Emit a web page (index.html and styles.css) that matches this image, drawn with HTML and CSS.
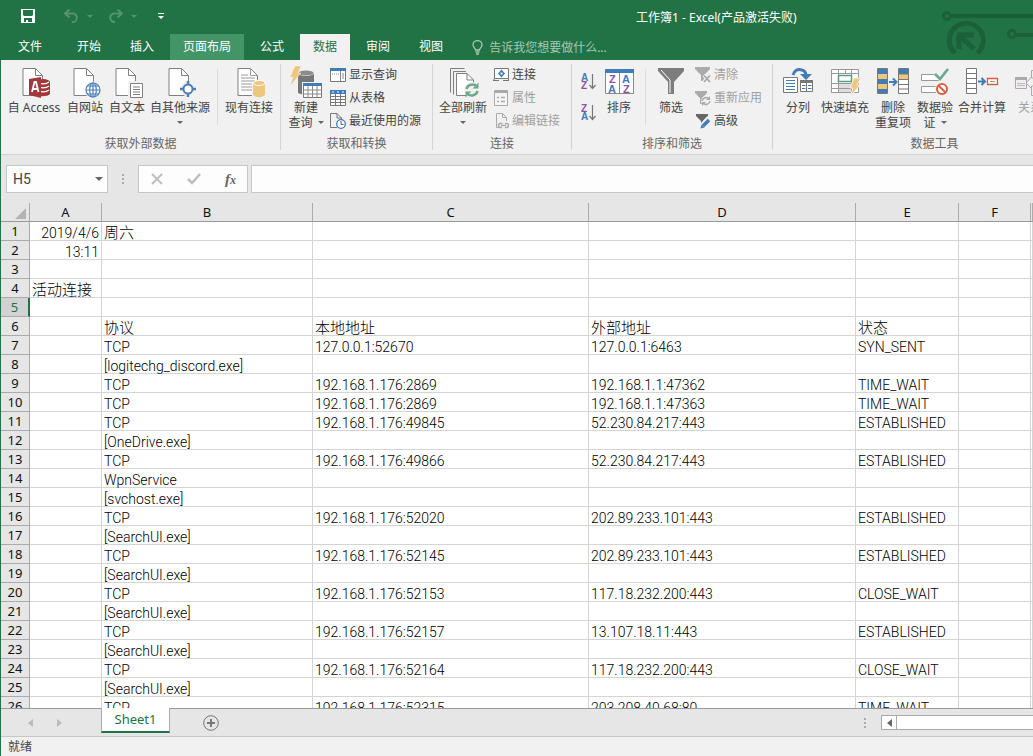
FILE: index.html
```html
<!DOCTYPE html>
<html lang="zh-CN">
<head>
<meta charset="utf-8">
<title>工作簿1 - Excel</title>
<link rel="stylesheet" href="styles.css">
</head>
<body>
<div class="window">
  <header class="top">
    <svg class="circuit" width="96" height="60" viewBox="0 0 96 60" fill="none" stroke="#1b6038">
      <circle cx="10" cy="16" r="3.500" stroke-width="3"/><path d="M14 16H96" stroke-width="4"/>
      <circle cx="75" cy="34" r="3.500" stroke-width="3"/><path d="M79 35H96" stroke-width="4"/>
      <path d="M18 53A17 17 0 1 1 40.500 53" stroke-width="5"/>
      <path d="M22 49V35M20 35H37M24 37L37 49" stroke-width="5"/>
    </svg>
    <div class="titlebar">
      <button class="qat save" aria-label="保存"><svg width="14" height="14" viewBox="0 0 14 14"><path fill="#fff" fill-rule="evenodd" d="M0 0H14V14H0ZM2 1V6L3 7H11L12 6V1ZM3 9V13H5V11H7V13H11V9Z"/></svg></button>
      <button class="qat undo" aria-label="撤消"><svg width="15" height="14" viewBox="0 0 15 14" fill="none" stroke="#54936f" stroke-width="2"><path d="M5.500 0.500L1 4.500L5.500 8.500M1.500 4.500H9A4.200 4.200 0 0 1 8 13"/></svg></button>
      <i class="caret dim"></i>
      <button class="qat redo" aria-label="恢复"><svg width="15" height="14" viewBox="0 0 15 14" fill="none" stroke="#54936f" stroke-width="2"><path d="M9.500 0.500L14 4.500L9.500 8.500M13.500 4.500H6A4.200 4.200 0 0 0 7 13"/></svg></button>
      <i class="caret dim"></i>
      <button class="qat more" aria-label="自定义快速访问工具栏"><svg width="6" height="7" viewBox="0 0 6 7" fill="#fff"><path d="M0 0H6V1H0ZM0 3H6L3 6Z"/></svg></button>
      <h1>工作簿1 - Excel(产品激活失败)</h1>
    </div>
    <nav class="tabs">
      <button class="tab file">文件</button>
      <button class="tab">开始</button>
      <button class="tab">插入</button>
      <button class="tab hover">页面布局</button>
      <button class="tab">公式</button>
      <button class="tab active">数据</button>
      <button class="tab">审阅</button>
      <button class="tab">视图</button>
      <button class="tellme"><svg width="11" height="15" viewBox="0 0 11 15" fill="none" stroke="#a3c9b3" stroke-width="1.300"><path d="M3.500 10C3.500 8 1 7.500 1 4.800A4.500 4.200 0 0 1 10 4.800C10 7.500 7.500 8 7.500 10ZM3.500 12H7.500M4 14H7"/></svg>告诉我您想要做什么...</button>
    </nav>
  </header>

  <div class="ribbon">
    <section class="group external">
      <div class="tools">
        <button class="big w60"><svg class="ic" viewBox="0 0 32 32"><path d="M5 2.500H17.500L24.500 9.500V29.500H5Z" fill="#fff" stroke="#808080"/><path d="M17.500 2.500V9.500H24.500" fill="none" stroke="#808080"/><ellipse cx="25" cy="16" rx="7" ry="3" fill="#a4373a"/><path d="M18 16H32V28Q29 31 21 30Z" fill="#a4373a"/><path d="M21 17Q27 19 31 16M21 21Q27 23 31 20M21 25Q27 27 31 24" stroke="#fff" fill="none" stroke-width="1.300"/><path d="M11 13L23 11V32L11 29Z" fill="#a4373a"/><path d="M14 26L16.500 16H18L20.500 26M15 23H20" fill="none" stroke="#fff" stroke-width="1.800"/></svg><span>自 Access</span></button>
        <button class="big w42"><svg class="ic" viewBox="0 0 32 32"><path d="M5 2.500H17.500L24.500 9.500V29.500H5Z" fill="#fff" stroke="#808080"/><path d="M17.500 2.500V9.500H24.500" fill="none" stroke="#808080"/><circle cx="24" cy="24" r="8.500" fill="#f1f1f1"/><g fill="#fff" stroke="#4a7fb8" stroke-width="1.200"><circle cx="24" cy="24" r="7"/><ellipse cx="24" cy="24" rx="3.300" ry="7"/><path d="M17 24H31M18.500 20H29.500M18.500 28H29.500M24 17V31"/></g></svg><span>自网站</span></button>
        <button class="big w42"><svg class="ic" viewBox="0 0 32 32"><path d="M5 2.500H17.500L24.500 9.500V29.500H5Z" fill="#fff" stroke="#808080"/><path d="M17.500 2.500V9.500H24.500" fill="none" stroke="#808080"/><path d="M17 15H33V33H17Z" fill="#f1f1f1"/><path d="M19.500 17.500H31.500V31.500H19.500Z" fill="#fff" stroke="#808080"/><path d="M22 21H29M22 23.500H29M22 26H29M22 28.500H29" stroke="#808080"/></svg><span>自文本</span></button>
        <button class="big w64"><svg class="ic" viewBox="0 0 32 32"><path d="M5 2.500H17.500L24.500 9.500V29.500H5Z" fill="#fff" stroke="#808080"/><path d="M17.500 2.500V9.500H24.500" fill="none" stroke="#808080"/><circle cx="24" cy="23" r="7.500" fill="#f1f1f1"/><circle cx="24" cy="23" r="4.500" fill="#fff" stroke="#4a7fb8" stroke-width="2"/><path d="M24 15V19M24 27V31M16 23H20M28 23H32" stroke="#4a7fb8" stroke-width="2.500"/></svg><span>自其他来源</span><span class="second"><i class="caret"></i></span></button>
        <i class="sep"></i>
        <button class="big w54"><svg class="ic" viewBox="0 0 32 32"><path d="M5 2.500H17.500L24.500 9.500V29.500H5Z" fill="#fff" stroke="#808080"/><path d="M17.500 2.500V9.500H24.500M8 9H15M8 12H22M8 15H22M8 18H19M8 21H19M8 24H19" fill="none" stroke="#999"/><path d="M19 17Q25 12 32 16V32H19Z" fill="#f1f1f1"/><path d="M20 17V29Q26 33.500 32 29V17Z" fill="#eec67c"/><ellipse cx="26" cy="17" rx="6" ry="2.500" fill="#eec67c" stroke="#fff"/></svg><span>现有连接</span></button>
      </div>
      <h2>获取外部数据</h2>
    </section>

    <section class="group transform">
      <div class="tools">
        <button class="big w44"><svg class="ic" viewBox="0 0 32 32"><path d="M8 7V27Q16 31 24 27V7Z" fill="#777"/><ellipse cx="16" cy="7" rx="8" ry="3" fill="#f1f1f1"/><ellipse cx="16" cy="7" rx="7.500" ry="2.500" fill="#8b8b8b"/><path d="M5 0H11L8 7H11L0 20L3 11H0Z" fill="#eec67c" stroke="#f1f1f1" stroke-width=".5"/><path d="M12 16H32V32H12Z" fill="#f1f1f1"/><path d="M13.500 17.500H31.500V31.500H13.500Z" fill="#fff" stroke="#777"/><path d="M13 17H32V20H13Z" fill="#3f7cb8"/><path d="M13 24H32M13 28H32M18 20V32M22.500 20V32M27 20V32" stroke="#888"/></svg><span>新建</span><span class="second">查询<i class="caret"></i></span></button>
        <div class="stack">
          <button class="small"><svg class="si" viewBox="0 0 16 16"><path d="M.5 1.500H15.500V14.500H.5Z" fill="#fff" stroke="#777"/><path d="M0 1H16V4H0Z" fill="#3f7cb8"/><path d="M10.500 4V14M2 7H3M4 7H5M6 7H7M12 7H14M12 9H14M12 11H14M8 7H9" stroke="#888"/></svg>显示查询</button>
          <button class="small"><svg class="si" viewBox="0 0 16 16"><path d="M.5.5H15.500V15.500H.5Z" fill="#fff" stroke="#777"/><path d="M0 0H16V4H0Z" fill="#3f7cb8"/><path d="M2 2H4M7 2H9M12 2H14" stroke="#fff"/><path d="M0 6.500H16M0 9.500H16M0 12.500H16M5.500 4V16M10.500 4V16" stroke="#777"/></svg>从表格</button>
          <button class="small"><svg class="si" viewBox="0 0 16 16"><path d="M.5.5H7L11.500 5V7M7 14.500H.5V.5M7 .5V5H11.500" fill="none" stroke="#777"/><circle cx="11" cy="11" r="4.300" fill="#fff" stroke="#3f7cb8" stroke-width="1.300"/><path d="M11 8V11.500H13.500" fill="none" stroke="#666"/></svg>最近使用的源</button>
        </div>
      </div>
      <h2>获取和转换</h2>
    </section>

    <section class="group links">
      <div class="tools">
        <button class="big w54"><svg class="ic" viewBox="0 0 32 32"><g fill="#fff" stroke="#808080"><path d="M3.500 26.500V2.500H17.500M6.500 28.500V5.500H19" fill="none"/><path d="M9.500 7.500H20L26.500 14V29.500H9.500Z"/><path d="M20 7.500V14H26.500" fill="none"/></g><circle cx="25" cy="24" r="8" fill="#f1f1f1"/><path d="M19.500 23A6 5.500 0 0 1 30 20.500M30.500 25A6 5.500 0 0 1 20 27.500" fill="none" stroke="#6fa98e" stroke-width="2.500"/><path d="M31.500 16.500V22.500H25.500ZM18.500 31.500V25.500H24.500Z" fill="#6fa98e"/></svg><span>全部刷新</span><span class="second"><i class="caret"></i></span></button>
        <div class="stack">
          <button class="small"><svg class="si" viewBox="0 0 16 16"><path d="M1.500 1.500H15.500V11.500H1.500Z" fill="#fff" stroke="#777"/><path d="M0 13.500H6M10 13.500H16M1 11.500V13.500M15.500 11.500V13.500" stroke="#777"/><path d="M8.500 2.500L12 6.500L8.500 10.500L5 6.500Z" fill="#3f7cb8"/><path d="M7.500 5.500H9.500V7.500H7.500Z" fill="#fff"/></svg>连接</button>
          <button class="small off" disabled><svg class="si" viewBox="0 0 16 16"><path d="M1.500.5H14.500V15.500H1.500Z" fill="#f6f6f6" stroke="#aaa"/><path d="M1 1H15V3H1Z" fill="#aaa"/><path d="M4 7.500H6M4 11.500H6M8 7.500H12M8 11.500H12" stroke="#aaa" stroke-width="1.500"/></svg>属性</button>
          <button class="small off" disabled><svg class="si" viewBox="0 0 16 16"><path d="M6 14.500H3.500V.5H9.500L13.500 4.500V8M9.500.5V4.500H13.500" fill="none" stroke="#aaa"/><path d="M9 14.500H7.500A2 2 0 0 1 7.500 10.500H9.500M12 14.500H13.500A2 2 0 0 0 13.500 10.500H12M8 12.500H13" fill="none" stroke="#aaa" stroke-width="1.500"/></svg>编辑链接</button>
        </div>
      </div>
      <h2>连接</h2>
    </section>

    <section class="group sorting">
      <div class="tools">
        <div class="pair">
          <button class="order" aria-label="升序"><svg width="16" height="20" viewBox="0 0 16 20"><text class="az blue" x="0" y="8">A</text><text class="az purple" x="0" y="16">Z</text><path d="M11.500 1V15M8.500 12L11.500 15.500L14.500 12" fill="none" stroke="#777" stroke-width="1.200"/></svg></button>
          <button class="order" aria-label="降序"><svg width="16" height="20" viewBox="0 0 16 20"><text class="az purple" x="0" y="8">Z</text><text class="az blue" x="0" y="16">A</text><path d="M11.500 1V15M8.500 12L11.500 15.500L14.500 12" fill="none" stroke="#777" stroke-width="1.200"/></svg></button>
        </div>
        <button class="big w42"><svg class="ic" viewBox="0 0 32 32"><path d="M2.500 3.500H30.500V27.500H2.500Z" fill="#fff" stroke="#888"/><path d="M2 3H31V7H2Z" fill="#3f7cb8"/><path d="M16.500 7V27" stroke="#888"/><text class="azl purple" x="6" y="17">Z</text><text class="azl blue" x="5" y="27">A</text><text class="azl blue" x="19" y="17">A</text><text class="azl purple" x="20" y="27">Z</text></svg><span>排序</span></button>
        <i class="sep"></i>
        <button class="big w42"><svg class="ic" viewBox="0 0 32 32"><path d="M3 2H29V5L19 16V28H13V16L3 5Z" fill="#7d7d7d"/><path d="M6 4L15 14V27" fill="none" stroke="#fff"/></svg><span>筛选</span></button>
        <div class="stack">
          <button class="small off" disabled><svg class="si" viewBox="0 0 16 16"><path d="M0 0H15V2L9 8V14H6V8L0 2Z" fill="#aaa"/><path d="M9 8L15 15M15 8L9 15" stroke="#f1f1f1" stroke-width="4"/><path d="M9 8.500L15 15M15 8.500L9 15" stroke="#aaa" stroke-width="1.800"/></svg>清除</button>
          <button class="small off" disabled><svg class="si" viewBox="0 0 16 16"><path d="M0 1H12V3L7 8V14H5V8L0 3Z" fill="#aaa"/><circle cx="11" cy="11" r="5" fill="#f1f1f1"/><path d="M7 11A4 4 0 0 1 14 9M15 11A4 4 0 0 1 8 13" fill="none" stroke="#aaa" stroke-width="1.500"/><path d="M15 6V10H11ZM7 16V12H11Z" fill="#aaa"/></svg>重新应用</button>
          <button class="small"><svg class="si" viewBox="0 0 16 16"><path d="M1 1H13V3L8 8V14H6V8L1 3Z" fill="#666"/><path d="M14 5L5 15" stroke="#f1f1f1" stroke-width="5"/><path d="M14 7L8 13" stroke="#3f7cb8" stroke-width="3.500"/><path d="M5.500 15.500L6.500 11.500L9.500 14.500Z" fill="#3f7cb8"/></svg>高级</button>
        </div>
      </div>
      <h2>排序和筛选</h2>
    </section>

    <section class="group datatools">
      <div class="tools">
        <button class="big w40"><svg class="ic" viewBox="0 0 32 32"><path d="M11 9Q13 2 20 4Q24 5 24 10" fill="none" stroke="#3f7cb8" stroke-width="3"/><path d="M18 8H30L24 14Z" fill="#3f7cb8"/><path d="M1.500 11.500H15.500V26.500H1.500Z" fill="#fff" stroke="#777"/><path d="M4 14.500H13M4 17.500H13M4 20.500H13M4 23.500H13" stroke="#3f7cb8"/><path d="M18.500 14.500H30.500V25.500H18.500Z" fill="#fff" stroke="#777"/><path d="M18 14H31V17H18Z" fill="#777"/><path d="M20 19.500H23.500M26 19.500H29.500M20 22.500H23.500M26 22.500H29.500" stroke="#3f7cb8"/><path d="M24.500 17V26" stroke="#777"/></svg><span>分列</span></button>
        <button class="big w54"><svg class="ic" viewBox="0 0 32 32"><path d="M2.500 3.500H29.500V26.500H2.500Z" fill="#fff" stroke="#999"/><path d="M9 17H22V26H9Z" fill="#ddd"/><path d="M2 7.500H30M2 17.500H30M2 22.500H22M9.500 3V27M16.500 3V8M22.500 3V27" stroke="#999"/><path d="M9.500 9.500H22.500V15.500H9.500Z" fill="#fff" stroke="#5a9e7c" stroke-width="1.500"/><path d="M25 12H32L28 19H31L21 31L24 22H21Z" fill="#eec67c" stroke="#f1f1f1"/></svg><span>快速填充</span></button>
        <button class="big w42"><svg class="ic" viewBox="0 0 32 32"><path d="M.5 2.500H10.500V27.500H.5ZM21.500 2.500H31.500V27.500H21.500Z" fill="#fff" stroke="#777"/><path d="M1 3H10V8H1ZM1 13H10V18H1ZM1 23H10V27H1ZM22 3H31V8H22Z" fill="#3f7cb8"/><path d="M1 8H10V13H1ZM1 18H10V23H1ZM22 8H31V13H22Z" fill="#eec67c"/><path d="M22 13.500H31M22 18.500H31M22 23H31M22 8H31" stroke="#777"/><path d="M12 16H19M16 12.500L19.500 16L16 19.500" fill="none" stroke="#3f7cb8" stroke-width="2"/></svg><span>删除</span><span class="second">重复项</span></button>
        <button class="big w42"><svg class="ic" viewBox="0 0 32 32"><path d="M2.500 8.500H19.500V14.500H2.500ZM2.500 20.500H19.500V26.500H2.500Z" fill="#fff" stroke="#999"/><path d="M17 7L22 13L29 4" fill="none" stroke="#f1f1f1" stroke-width="5"/><path d="M16 8L21 13L29 3" fill="none" stroke="#6fa98e" stroke-width="2.800"/><circle cx="23" cy="23" r="7" fill="#f1f1f1"/><circle cx="23" cy="23" r="5" fill="#fff" stroke="#d65f43" stroke-width="2"/><path d="M19.500 19.500L26.500 26.500" stroke="#d65f43" stroke-width="2"/></svg><span>数据验</span><span class="second">证<i class="caret"></i></span></button>
        <button class="big w52"><svg class="ic" viewBox="0 0 32 32"><path d="M.5 2.500H10.500V27.500H.5Z" fill="#fff" stroke="#777"/><path d="M0 7.500H11M0 12.500H11M0 17.500H11M0 22.500H11" stroke="#777"/><path d="M12 15.500H18M15.500 12L19 15.500L15.500 19" fill="none" stroke="#3f7cb8" stroke-width="2"/><path d="M21.500 12.500H31.500V18.500H21.500Z" fill="#fff" stroke="#d65f43" stroke-width="1.300"/><path d="M24 15.500H29" stroke="#999"/></svg><span>合并计算</span></button>
        <button class="big w44 off" disabled><svg class="ic" viewBox="0 0 32 32"><path d="M1.500 11.500H12.500V22.500H1.500Z" fill="#f1edf3" stroke="#aaa"/><path d="M1 11H13V14H1Z" fill="#aaa"/><path d="M3 17.500H11M3 19.500H11" stroke="#bbb"/><path d="M13 16L20 8M13 18L20 25" stroke="#aaa"/><path d="M17.500 4.500H28V12H17.500ZM17.500 20H28V29.500H17.500Z" fill="#f1edf3" stroke="#aaa"/></svg><span>关系</span></button>
      </div>
      <h2>数据工具</h2>
    </section>
  </div>

  <div class="formulabar">
    <div class="namebox"><input aria-label="名称框" value="H5"><i class="caret"></i></div>
    <i class="dots"></i>
    <div class="fbuttons">
      <button aria-label="取消"><svg width="12" height="12" viewBox="0 0 12 12" stroke="#bdbdbd" stroke-width="1.800"><path d="M1 1L11 11M11 1L1 11"/></svg></button>
      <button aria-label="输入"><svg width="14" height="12" viewBox="0 0 14 12" fill="none" stroke="#bdbdbd" stroke-width="2.500"><path d="M1 6L5 10L13 1"/></svg></button>
      <button class="fx" aria-label="插入函数">f<sub>x</sub></button>
    </div>
    <input class="formula" aria-label="编辑栏">
  </div>

  <main class="gridwrap">
    <table class="grid">
      <colgroup><col class="c-n"><col class="c-a"><col class="c-b"><col class="c-c"><col class="c-d"><col class="c-e"><col class="c-f"><col></colgroup>
      <thead><tr><th class="corner"><svg width="11" height="11" viewBox="0 0 11 11"><path d="M11 0V11H0Z" fill="#b4b4b4"/></svg></th><th>A</th><th>B</th><th>C</th><th>D</th><th>E</th><th>F</th><th></th></tr></thead>
      <tbody>
        <tr><th>1</th><td class="num">2019/4/6</td><td class="zh">周六</td><td></td><td></td><td></td><td></td><td></td></tr>
        <tr><th>2</th><td class="num">13:11</td><td></td><td></td><td></td><td></td><td></td><td></td></tr>
        <tr><th>3</th><td></td><td></td><td></td><td></td><td></td><td></td><td></td></tr>
        <tr><th>4</th><td class="zh">活动连接</td><td></td><td></td><td></td><td></td><td></td><td></td></tr>
        <tr class="selected"><th>5</th><td></td><td></td><td></td><td></td><td></td><td></td><td></td></tr>
        <tr><th>6</th><td></td><td class="zh">协议</td><td class="zh">本地地址</td><td class="zh">外部地址</td><td class="zh">状态</td><td></td><td></td></tr>
        <tr><th>7</th><td></td><td>TCP</td><td>127.0.0.1:52670</td><td>127.0.0.1:6463</td><td>SYN_SENT</td><td></td><td></td></tr>
        <tr><th>8</th><td></td><td>[logitechg_discord.exe]</td><td></td><td></td><td></td><td></td><td></td></tr>
        <tr><th>9</th><td></td><td>TCP</td><td>192.168.1.176:2869</td><td>192.168.1.1:47362</td><td>TIME_WAIT</td><td></td><td></td></tr>
        <tr><th>10</th><td></td><td>TCP</td><td>192.168.1.176:2869</td><td>192.168.1.1:47363</td><td>TIME_WAIT</td><td></td><td></td></tr>
        <tr><th>11</th><td></td><td>TCP</td><td>192.168.1.176:49845</td><td>52.230.84.217:443</td><td>ESTABLISHED</td><td></td><td></td></tr>
        <tr><th>12</th><td></td><td>[OneDrive.exe]</td><td></td><td></td><td></td><td></td><td></td></tr>
        <tr><th>13</th><td></td><td>TCP</td><td>192.168.1.176:49866</td><td>52.230.84.217:443</td><td>ESTABLISHED</td><td></td><td></td></tr>
        <tr><th>14</th><td></td><td>WpnService</td><td></td><td></td><td></td><td></td><td></td></tr>
        <tr><th>15</th><td></td><td>[svchost.exe]</td><td></td><td></td><td></td><td></td><td></td></tr>
        <tr><th>16</th><td></td><td>TCP</td><td>192.168.1.176:52020</td><td>202.89.233.101:443</td><td>ESTABLISHED</td><td></td><td></td></tr>
        <tr><th>17</th><td></td><td>[SearchUI.exe]</td><td></td><td></td><td></td><td></td><td></td></tr>
        <tr><th>18</th><td></td><td>TCP</td><td>192.168.1.176:52145</td><td>202.89.233.101:443</td><td>ESTABLISHED</td><td></td><td></td></tr>
        <tr><th>19</th><td></td><td>[SearchUI.exe]</td><td></td><td></td><td></td><td></td><td></td></tr>
        <tr><th>20</th><td></td><td>TCP</td><td>192.168.1.176:52153</td><td>117.18.232.200:443</td><td>CLOSE_WAIT</td><td></td><td></td></tr>
        <tr><th>21</th><td></td><td>[SearchUI.exe]</td><td></td><td></td><td></td><td></td><td></td></tr>
        <tr><th>22</th><td></td><td>TCP</td><td>192.168.1.176:52157</td><td>13.107.18.11:443</td><td>ESTABLISHED</td><td></td><td></td></tr>
        <tr><th>23</th><td></td><td>[SearchUI.exe]</td><td></td><td></td><td></td><td></td><td></td></tr>
        <tr><th>24</th><td></td><td>TCP</td><td>192.168.1.176:52164</td><td>117.18.232.200:443</td><td>CLOSE_WAIT</td><td></td><td></td></tr>
        <tr><th>25</th><td></td><td>[SearchUI.exe]</td><td></td><td></td><td></td><td></td><td></td></tr>
        <tr><th>26</th><td></td><td>TCP</td><td>192.168.1.176:52315</td><td>203.208.40.68:80</td><td>TIME_WAIT</td><td></td><td></td></tr>
      </tbody>
    </table>
  </main>

  <div class="sheetbar">
    <div class="nav">
      <button aria-label="上一个工作表"><svg width="5" height="8" viewBox="0 0 5 8" fill="#bbb"><path d="M5 0V8L0 4Z"/></svg></button>
      <button aria-label="下一个工作表"><svg width="5" height="8" viewBox="0 0 5 8" fill="#bbb"><path d="M0 0V8L5 4Z"/></svg></button>
    </div>
    <button class="sheet">Sheet1</button>
    <button class="add" aria-label="新工作表"><svg width="16" height="16" viewBox="0 0 16 16" fill="none" stroke="#777"><circle cx="8" cy="8" r="7.300"/><path d="M8 4V12M4 8H12" stroke-width="2"/></svg></button>
    <i class="dots end"></i>
    <div class="scroll"><button aria-label="向左滚动"><svg width="5" height="8" viewBox="0 0 5 8" fill="#666"><path d="M5 0V8L0 4Z"/></svg></button></div>
  </div>
  <footer class="status">就绪</footer>
</div>
</body>
</html>
```
FILE: styles.css
```css
* { box-sizing: border-box; }
body {
  margin: 0;
  font: 12px/15px "Noto Sans", "Noto Sans CJK SC", sans-serif;
  color: #444;
}
button, input { font: inherit; color: inherit; border: 0; padding: 0; margin: 0; background: none; }
svg { display: block; flex: none; }
h1, h2 { margin: 0; font-size: 12px; font-weight: 400; }

.window {
  display: flex;
  flex-direction: column;
  height: 100vh;
  overflow: hidden;
  border-left: 1px solid #217346;
  background: #e6e6e6;
}

.top { position: relative; background: #217346; color: #fff; }
.circuit { position: absolute; top: 0; right: 0; }
.titlebar { display: flex; align-items: center; height: 34px; padding: 0 0 2px 20px; }
.undo { margin-left: 29px; }
.redo { margin-left: 15px; }
.more { margin-left: 21px; }
.titlebar h1 { margin: 2px 0 0 472px; white-space: nowrap; }
.caret {
  display: inline-block;
  flex: none;
  border: 3px solid transparent;
  border-top-color: #666;
  border-bottom-width: 0;
}
.caret.dim { border-top-color: #54936f; margin-left: 8px; }

.tabs { display: flex; gap: 3px; height: 26px; padding-left: 4px; }
.tab { padding: 0 13px 2px; white-space: nowrap; }
.tab.file { margin-right: 6px; }
.tab.hover { background: #439467; }
.tab.active { background: #f1f1f1; color: #217346; }
.tellme { display: flex; align-items: center; gap: 6px; margin-left: 13px; color: #a3c9b3; white-space: nowrap; }

.ribbon {
  display: flex;
  flex: none;
  padding: 4px 0;
  overflow: hidden;
  background: #f1f1f1;
  border-bottom: 1px solid #d2d2d2;
}
.group {
  display: flex;
  flex: none;
  flex-direction: column;
  justify-content: space-between;
  height: 86px;
  border-right: 1px solid #d4d4d4;
}
.group h2 { text-align: center; color: #666; line-height: 12px; }
.tools { display: flex; align-items: flex-start; padding-left: 3px; }
.external { width: 280px; }
.transform { width: 152px; }
.links { width: 139px; }
.sorting { width: 201px; }
.datatools { width: 324px; }
.datatools .tools { padding-left: 5px; }

.big { display: flex; flex: none; flex-direction: column; align-items: center; padding-top: 2px; white-space: nowrap; }
.ic { width: 32px; height: 32px; margin-bottom: 2px; overflow: visible; }
.second { display: flex; align-items: center; gap: 5px; height: 15px; }
.w40 { width: 40px; }
.w42 { width: 42px; }
.w44 { width: 44px; }
.w52 { width: 52px; }
.w54 { width: 54px; }
.w60 { width: 60px; }
.w64 { width: 64px; }
.off { color: #a0a0a0; }
.sep { width: 1px; height: 56px; margin: 5px 4px 0 5px; background: #dcdcdc; }
.stack { display: flex; flex-direction: column; margin-left: 3px; }
.transform .stack { margin-left: 2px; }
.small { display: flex; align-items: center; gap: 3px; height: 23px; padding-bottom: 2px; white-space: nowrap; }
.si { width: 16px; height: 16px; overflow: visible; }
.pair { display: flex; flex-direction: column; gap: 11px; padding: 9px 1px 0 6px; }
.az { font: 700 10px "Liberation Sans", sans-serif; }
.azl { font: 700 11px "Liberation Sans", sans-serif; }
.blue { fill: #3f7cb8; }
.purple { fill: #8e52a8; }

.formulabar { display: flex; flex: none; align-items: stretch; height: 48px; padding: 10px 0 10px 5px; }
.namebox, .fbuttons, .formula { background: #fdfdfd; border: 1px solid #c6c6c6; }
.namebox { display: flex; align-items: center; width: 102px; padding: 0 4px 0 6px; }
.namebox input { flex: 1; min-width: 0; font: 14px/20px Roboto, sans-serif; }
.namebox .caret { border-width: 4px 4px 0; }
.dots {
  width: 2px;
  height: 10px;
  margin: auto 14px;
  background: repeating-linear-gradient(#aaa 0 2px, transparent 2px 4px);
}
.fbuttons { display: flex; align-items: center; justify-content: space-between; width: 110px; padding: 0 11px 0 12px; margin-right: 3px; }
.fx { font: italic 700 15px/20px "Liberation Serif", serif; color: #666; }
.fx sub { font-size: 12px; line-height: 0; vertical-align: baseline; }
.formula { flex: 1; min-width: 0; border-right: 0; padding: 0 6px; font: 14px/20px Roboto, sans-serif; }

.gridwrap { flex: 1; min-height: 0; overflow: hidden; background: #fff; }
.grid { width: 100%; table-layout: fixed; border-collapse: separate; border-spacing: 0; }
.c-n { width: 29px; }
.c-a, .c-f { width: 72px; }
.c-b { width: 211px; }
.c-c { width: 276px; }
.c-d { width: 267px; }
.c-e { width: 103px; }
.grid th {
  height: 19px;
  padding: 0;
  background: #e6e6e6;
  border-right: 1px solid #ababab;
  border-bottom: 1px solid #ababab;
  font: 13px/18px "Noto Sans", sans-serif;
  color: #111;
}
.grid thead th { border-bottom-color: #999; }
.grid .corner svg { margin: 3px 3px 0 auto; }
.grid td {
  height: 19px;
  padding: 4px 2px 0;
  border-right: 1px solid #d4d4d4;
  border-bottom: 1px solid #d4d4d4;
  font: 300 14px/14px Roboto, sans-serif;
  color: #000;
  white-space: nowrap;
}
.grid .zh { padding-top: 2px; font: 300 15px/16px "Noto Sans CJK SC", sans-serif; }
.grid .num { text-align: right; }
.grid .selected th { background: #d2d2d2; color: #217346; border-right: 2px solid #217346; }

.sheetbar { display: flex; flex: none; align-items: center; height: 28px; border-top: 1px solid #999; }
.nav { display: flex; gap: 24px; width: 100px; padding-left: 27px; }
.sheet {
  align-self: flex-start;
  width: 69px;
  height: 25px;
  margin-top: -1px;
  background: #fff;
  border: 1px solid #ababab;
  border-width: 0 1px 2px;
  border-bottom-color: #217346;
  color: #217346;
  font-size: 13px;
}
.add { margin-left: 33px; }
.dots.end { margin: 0 15px 0 auto; }
.scroll { display: flex; width: 152px; height: 15px; background: #fff; border: 1px solid #ababab; border-right: 0; }
.scroll button { display: flex; align-items: center; justify-content: center; width: 15px; border-right: 1px solid #ababab; }
.status { flex: none; height: 20px; padding: 1px 7px; line-height: 17px; background: #f1f1f1; border-top: 1px solid #c6c6c6; }
```
